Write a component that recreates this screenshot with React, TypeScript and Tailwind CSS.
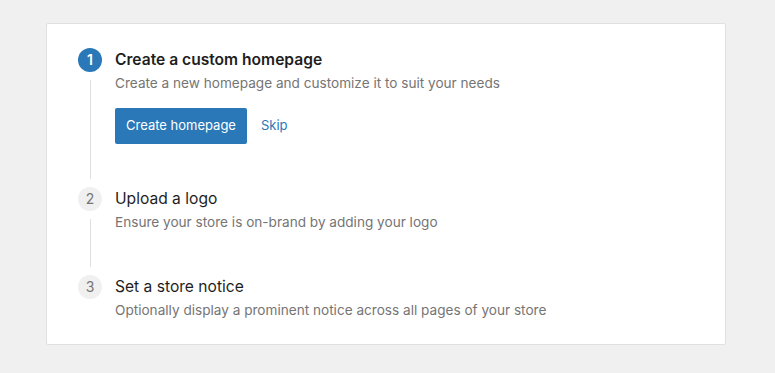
import React from "react"

type Step = {
  n: number
  title: string
  desc: string
  active?: boolean
}

const steps: Step[] = [
  {
    n: 1,
    title: "Create a custom homepage",
    desc: "Create a new homepage and customize it to suit your needs",
    active: true,
  },
  {
    n: 2,
    title: "Upload a logo",
    desc: "Ensure your store is on-brand by adding your logo",
  },
  {
    n: 3,
    title: "Set a store notice",
    desc: "Optionally display a prominent notice across all pages of your store",
  },
]

export default function App() {
  return (
    <div
      className="min-h-screen w-full bg-[#f0f0f0] pt-[23px] pl-[46px]"
      style={{ fontFamily: "Inter, 'Noto Sans', sans-serif" }}
    >
      <div className="w-[680px] bg-white border border-[#e0e0e0] rounded-[2px] pt-6 pb-6 pl-[31px]">
        {steps.map((step, i) => {
          const last = i === steps.length - 1
          return (
            <div key={step.n} className="flex">
              <div className="flex w-6 flex-col items-center">
                <div
                  className={`flex h-6 w-6 shrink-0 items-center justify-center rounded-full text-[14px] leading-none ${
                    step.active
                      ? "bg-[#2a78b8] font-semibold text-white"
                      : "bg-[#f0f0f0] text-[#757575]"
                  }`}
                >
                  {step.n}
                </div>
                {!last && <div className="my-2 w-px flex-1 bg-[#e0e0e0]" />}
              </div>
              <div className={`ml-[13px] ${last ? "" : "pb-[43px]"}`}>
                <h3
                  className={`text-[15.6px] leading-6 text-[#1e1e1e] ${
                    step.active ? "font-semibold" : "font-normal"
                  }`}
                >
                  {step.title}
                </h3>
                <p className="mt-px text-[13.6px] leading-5 text-[#757575]">{step.desc}</p>
                {step.active && (
                  <div className="mt-[15px] flex items-center">
                    <button className="h-9 rounded-[2px] bg-[#2a78b8] px-[11px] text-[13px] text-white">
                      Create homepage
                    </button>
                    <button className="ml-[14px] text-[13px] text-[#2a78b8]">Skip</button>
                  </div>
                )}
              </div>
            </div>
          )
        })}
      </div>
    </div>
  )
}
